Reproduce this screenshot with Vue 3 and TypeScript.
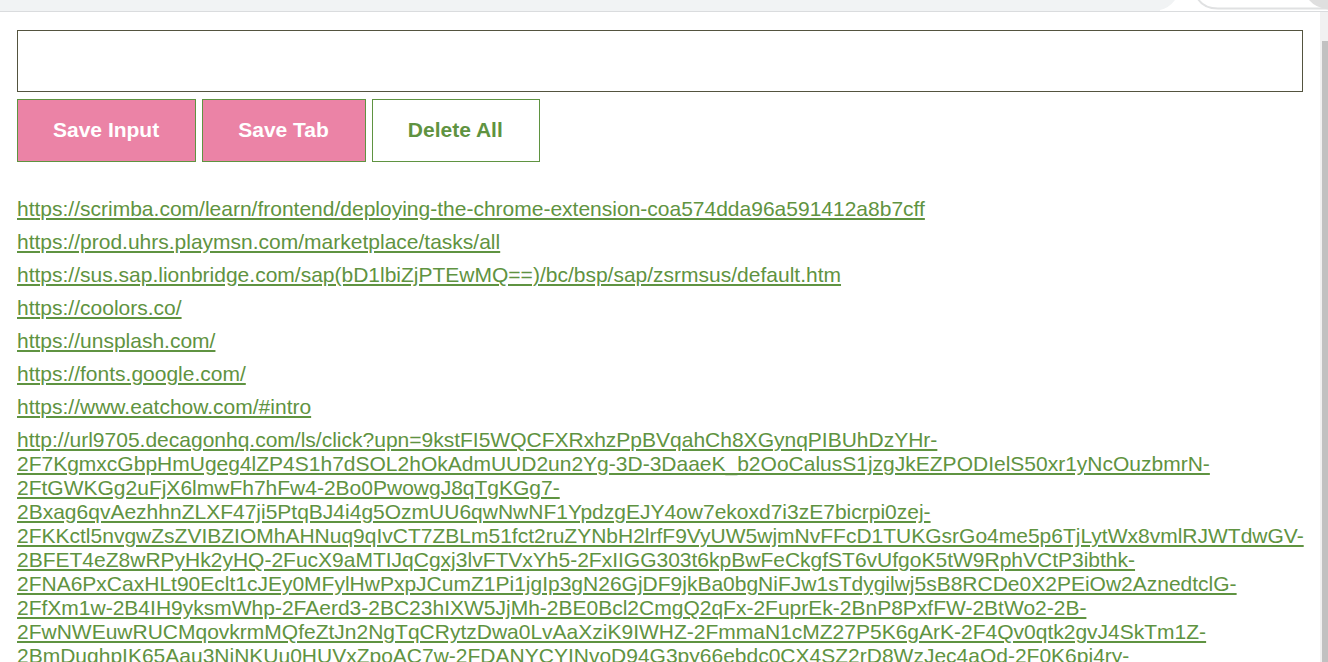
<script setup lang="ts">
import { ref } from 'vue'

const draft = ref('')
const leads = ref<string[]>([
  'https://scrimba.com/learn/frontend/deploying-the-chrome-extension-coa574dda96a591412a8b7cff',
  'https://prod.uhrs.playmsn.com/marketplace/tasks/all',
  'https://sus.sap.lionbridge.com/sap(bD1lbiZjPTEwMQ==)/bc/bsp/sap/zsrmsus/default.htm',
  'https://coolors.co/',
  'https://unsplash.com/',
  'https://fonts.google.com/',
  'https://www.eatchow.com/#intro',
  [
    'http://url9705.decagonhq.com/ls/click?upn=9kstFI5WQCFXRxhzPpBVqahCh8XGynqPIBUhDzYHr-',
    '2F7KgmxcGbpHmUgeg4lZP4S1h7dSOL2hOkAdmUUD2un2Yg-3D-3DaaeK_b2OoCalusS1jzgJkEZPODIelS50xr1yNcOuzbmrN-',
    '2FtGWKGg2uFjX6lmwFh7hFw4-2Bo0PwowgJ8qTgKGg7-',
    '2Bxag6qvAezhhnZLXF47ji5PtqBJ4i4g5OzmUU6qwNwNF1YpdzgEJY4ow7ekoxd7i3zE7bicrpi0zej-',
    '2FKKctl5nvgwZsZVIBZIOMhAHNuq9qIvCT7ZBLm51fct2ruZYNbH2lrfF9VyUW5wjmNvFFcD1TUKGsrGo4me5p6TjLytWx8vmlRJWTdwGV-',
    '2BFET4eZ8wRPyHk2yHQ-2FucX9aMTIJqCgxj3lvFTVxYh5-2FxIIGG303t6kpBwFeCkgfST6vUfgoK5tW9RphVCtP3ibthk-',
    '2FNA6PxCaxHLt90Eclt1cJEy0MFylHwPxpJCumZ1Pi1jgIp3gN26GjDF9jkBa0bgNiFJw1sTdygilwj5sB8RCDe0X2PEiOw2AznedtclG-',
    '2FfXm1w-2B4IH9yksmWhp-2FAerd3-2BC23hIXW5JjMh-2BE0Bcl2CmgQ2qFx-2FuprEk-2BnP8PxfFW-2BtWo2-2B-',
    '2FwNWEuwRUCMqovkrmMQfeZtJn2NgTqCRytzDwa0LvAaXziK9IWHZ-2FmmaN1cMZ27P5K6gArK-2F4Qv0qtk2gvJ4SkTm1Z-',
    '2BmDughpIK65Aau3NjNKUu0HUVxZpoAC7w-2FDANYCYINvoD94G3py66ebdc0CX4SZ2rD8WzJec4aQd-2F0K6pj4ry-',
  ].join(''),
])

function saveInput() {
  if (draft.value) leads.value.push(draft.value)
  draft.value = ''
}

function saveTab() {
  leads.value.push(window.location.href)
}

function deleteAll() {
  leads.value = []
}
</script>

<template>
  <div class="window">
    <header class="chrome">
      <div class="tabs"></div>
      <svg class="pill" viewBox="0 0 168 11" aria-hidden="true">
        <path d="M0 0H168V11H0Z" fill="#fff" />
        <path d="M0 0H15Q9 8 0 10Z" fill="#f1f3f4" />
        <path d="M38 -1Q44 8.500 58 8.500H168" fill="none" stroke="#e0e1e2" stroke-width="2" />
        <path d="M149 0Q156 8 168 9.500V0Z" fill="#dfdfdf" />
      </svg>
    </header>
    <div class="viewport">
      <main class="page">
        <input v-model="draft" class="field" type="text" aria-label="Lead URL" />
        <div class="actions">
          <button class="btn" type="button" @click="saveInput">Save Input</button>
          <button class="btn" type="button" @click="saveTab">Save Tab</button>
          <button class="btn btn-outline" type="button" @click="deleteAll">Delete All</button>
        </div>
        <ul class="leads">
          <li v-for="lead in leads" :key="lead">
            <a :href="lead" target="_blank">{{ lead }}</a>
          </li>
        </ul>
      </main>
      <div class="scrollbar"><div class="thumb"></div></div>
    </div>
  </div>
</template>

<style>
body {
  margin: 0;
  background: #fff;
}
</style>

<style scoped>
.window {
  display: flex;
  flex-direction: column;
  height: 100vh;
  overflow: hidden;
  font-family: "Liberation Sans", Arial, sans-serif;
  font-size: 21px;
  line-height: 24px;
}
.chrome {
  display: flex;
  flex: none;
  height: 11px;
  border-bottom: 1px solid #dadcde;
}
.tabs {
  flex: 1;
  background: #f1f3f4;
}
.pill {
  width: 168px;
  height: 11px;
}
.viewport {
  display: flex;
  flex: 1;
  min-height: 0;
}
.page {
  flex: 1;
  min-width: 0;
  padding: 18px 17px 0;
}
.field {
  display: block;
  box-sizing: border-box;
  width: 100%;
  height: 62px;
  margin: 0 0 7px;
  padding: 0 18px;
  border: 1px solid #54543f;
  border-radius: 0;
  background: #fff;
  font: inherit;
  outline: none;
}
.actions {
  display: flex;
  gap: 6px;
}
.btn {
  box-sizing: border-box;
  height: 63px;
  margin: 0;
  padding: 0 36px 2px 35px;
  border: 1px solid #5f9341;
  border-radius: 0;
  background: #eb83a6;
  color: #fff;
  font: inherit;
  font-weight: 700;
  cursor: pointer;
}
.btn-outline {
  background: #fff;
  color: #5f9341;
}
.leads {
  display: flex;
  flex-direction: column;
  gap: 9px;
  margin: 35px 0 0;
  padding: 0;
  list-style: none;
}
.leads a {
  color: #5f9341;
}
.scrollbar {
  display: flex;
  flex: none;
  width: 8px;
  box-sizing: border-box;
  padding: 29px 0 0 2px;
  background: #f1f1f1;
}
.thumb {
  flex: 1;
  background: #c1c1c1;
}
</style>
